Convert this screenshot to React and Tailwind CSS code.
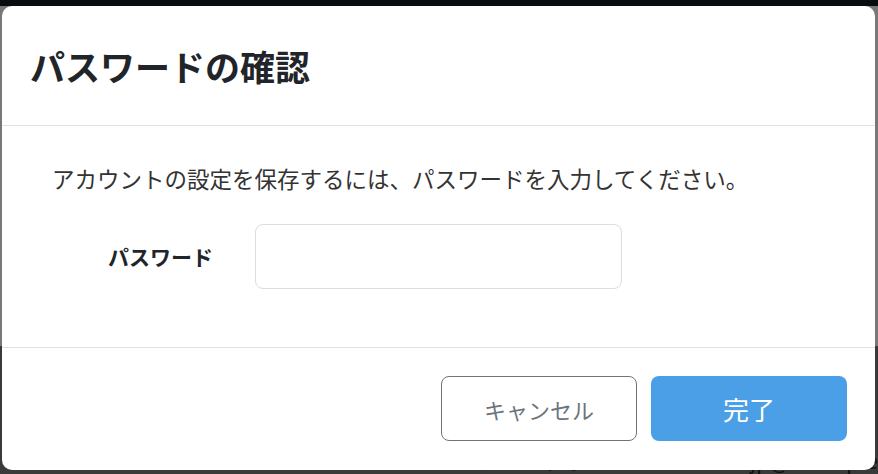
export default function App() {
  const font = { fontFamily: '"Noto Sans CJK JP", "Noto Sans", sans-serif' };
  return (
    <div className="relative w-[878px] h-[474px] overflow-hidden bg-[#3a3a3a]" style={font}>
      {/* backdrop page */}
      <div className="flex flex-col h-full">
        <div className="h-[6px] bg-[#080c10]" />
        <div className="h-[340px] bg-[#787878]" />
        <div className="flex-1 bg-[#3a3a3a] flex items-end">
          <div className="flex gap-[20px] pl-[478px] translate-y-[18px] text-[22px] leading-none font-bold text-[#111]">
            <span>メールアドレス</span>
            <span className="font-normal">mocha.sta.jp@example</span>
          </div>
        </div>
      </div>

      {/* modal */}
      <div className="absolute left-[2px] top-[6px] w-[873px] h-[464px] bg-white rounded-[10px] flex flex-col">
        <div className="h-[120px] border-b border-[#dee2e6] flex items-center pl-[28px] shrink-0">
          <h1 className="text-[35px] font-bold text-[#212529] leading-none">パスワードの確認</h1>
        </div>
        <div className="h-[222px] border-b border-[#dee2e6] pt-[36px] pl-[50px] shrink-0">
          <p className="text-[22.5px] leading-[32px] text-[#333]">アカウントの設定を保存するには、パスワードを入力してください。</p>
          <div className="mt-[30px] flex items-center">
            <label className="w-[203px] pl-[56px] text-[21px] font-bold text-[#212529]">パスワード</label>
            <input type="password" className="w-[367px] h-[65px] border border-[#dcdce4] rounded-[8px] outline-none" />
          </div>
        </div>
        <div className="flex-1 flex justify-end items-start pt-[28px] pr-[28px] gap-[14px]">
          <button className="w-[196px] h-[65px] rounded-[8px] border border-[#6c757d] text-[#6c757d] text-[22px] leading-none bg-white">キャンセル</button>
          <button className="w-[196px] h-[65px] rounded-[8px] bg-[#4a9fe6] text-white text-[26px] leading-none">完了</button>
        </div>
      </div>
    </div>
  );
}
